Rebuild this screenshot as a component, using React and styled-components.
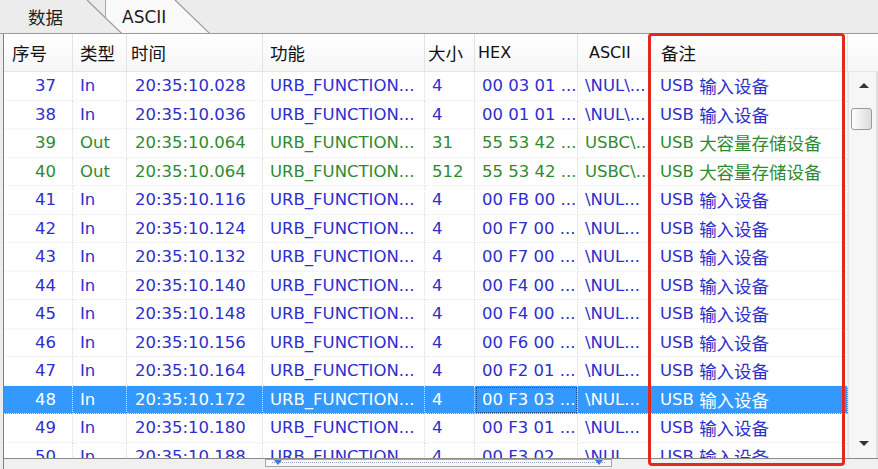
import React from 'react'
import styled, { createGlobalStyle } from 'styled-components'

const GlobalStyle = createGlobalStyle`
  html, body {
    margin: 0;
    padding: 0;
    background: #ececec;
  }
  body {
    font-family: "DejaVu Sans", "Noto Sans CJK SC", sans-serif;
  }
`

const colors = {
  blue: '#2e2ecc',
  green: '#2f8a2f',
  select: '#3399ff',
  grid: '#dcdcdc',
  frame: '#808080',
  red: '#e5281e',
}

const Root = styled.div`
  position: relative;
  width: 878px;
  height: 469px;
  overflow: hidden;
  display: flex;
  flex-direction: column;
  background: #ececec;
`

const TabStrip = styled.div`
  flex: none;
  height: 33px;
  display: flex;
  border-bottom: 1px solid #9b9b9b;
`

const Tab = styled.div`
  position: relative;
  flex: none;
  box-sizing: border-box;
  width: ${p => p.$width}px;
  height: 33px;
  margin-left: ${p => -p.$overlap || 0}px;
  padding-left: ${p => p.$pad}px;
  z-index: ${p => p.$z};
  display: flex;
  align-items: center;
  font-size: 17px;
  color: #1c1c1c;
  background: ${p => (p.$active ? '#f9f9f9' : '#ececec')};
  border-left: ${p => (p.$edge ? '1px solid #a8a8a8' : 'none')};
  clip-path: polygon(0 0, calc(100% - 34px) 0, 100% 100%, 0 100%);

  &::after {
    content: '';
    position: absolute;
    left: calc(100% - 34px);
    top: -1px;
    width: 48px;
    height: 2px;
    background: #9c9c9c;
    transform-origin: 0 0;
    transform: rotate(44deg);
  }
`

const Frame = styled.div`
  flex: 1;
  min-height: 0;
  display: flex;
  flex-direction: column;
  margin-left: 3px;
  border-left: 1px solid ${colors.frame};
  background: #fff;
`

const HeaderRow = styled.div`
  flex: none;
  height: 38px;
  display: flex;
  box-sizing: border-box;
  background: linear-gradient(#ffffff, #f6f6f6);
  border-bottom: 1px solid #e4e4e4;
`

const HeadCell = styled.div`
  flex: none;
  box-sizing: border-box;
  width: ${p => p.$width}px;
  padding-left: ${p => p.$pad}px;
  display: flex;
  align-items: center;
  font-size: 16px;
  color: #111;
  border-right: 1px solid #e3e3e3;
`

const Cjk = styled.span`
  font-family: "Noto Sans CJK SC", sans-serif;
  font-size: 17.5px;
`

const HeadFiller = styled.div`
  flex: 1;
`

const Body = styled.div`
  flex: 1;
  min-height: 0;
  display: flex;
`

const Rows = styled.div`
  flex: none;
  width: 844px;
  overflow: hidden;
`

const Row = styled.div`
  display: flex;
  height: 28.5px;
  background: ${p => (p.$selected ? colors.select : 'transparent')};
  color: ${p => (p.$selected ? '#fff' : p.$out ? colors.green : colors.blue)};
`

const Cell = styled.div`
  flex: none;
  box-sizing: border-box;
  width: ${p => p.$width}px;
  display: flex;
  align-items: center;
  justify-content: ${p => (p.$right ? 'flex-end' : 'flex-start')};
  padding: 0 ${p => (p.$right ? 16 : 0)}px 0 ${p => (p.$right ? 0 : p.$pad)}px;
  font-size: 16.5px;
  white-space: nowrap;
  overflow: hidden;
  border-right: 1px dotted ${p => (p.$selected ? '#cfe4ff' : colors.grid)};
  border-bottom: 1px dotted #ececec;
  outline: ${p => (p.$focus ? '1px dotted #1f4f8f' : 'none')};
  outline-offset: -2px;
`

const VScroll = styled.div`
  flex: 1;
  position: relative;
  background: #f6f6f6;
  border-left: 1px solid #e4e4e4;
  border-right: 2px solid #e0e0e0;
`

const Arrow = styled.div`
  position: absolute;
  left: 10px;
  ${p => (p.$down ? 'bottom: 12px;' : 'top: 11px;')}
  width: 0;
  height: 0;
  border-left: 5px solid transparent;
  border-right: 5px solid transparent;
  ${p => (p.$down ? 'border-top' : 'border-bottom')}: 5px solid #333;
`

const Thumb = styled.div`
  position: absolute;
  left: 2px;
  top: 36px;
  width: 21px;
  height: 22px;
  box-sizing: border-box;
  border: 1px solid #9a9a9a;
  border-radius: 3px;
  background: linear-gradient(90deg, #fdfdfd, #dcdcdc);
`

const HScroll = styled.div`
  flex: none;
  height: 11px;
  box-sizing: border-box;
  border-top: 1px solid #8a8a8a;
  background: #f0f0f0;
  padding-left: 261px;
`

const HThumb = styled.div`
  position: relative;
  width: 347px;
  height: 8px;
  box-sizing: border-box;
  border: 1px solid #a6a6a6;
  background: #f7f7f7;

  &::before {
    content: '';
    position: absolute;
    left: 6px;
    right: 6px;
    top: 2px;
    border-top: 1px dotted #8fa8c8;
  }
`

const Notch = styled.span`
  position: absolute;
  top: 0;
  ${p => (p.$right ? 'right: 8px;' : 'left: 8px;')}
  width: 0;
  height: 0;
  border-left: 4px solid transparent;
  border-right: 4px solid transparent;
  border-top: 5px solid #3f78d8;
`

const Marker = styled.div`
  position: absolute;
  left: 648px;
  top: 33px;
  width: 197px;
  height: 433px;
  box-sizing: border-box;
  border: 3px solid ${colors.red};
  border-radius: 4px;
  pointer-events: none;
`

const columns = [
  { key: 'no', label: '序号', width: 69, head: 8, pad: 0, right: true },
  { key: 'type', label: '类型', width: 54, head: 7, pad: 7 },
  { key: 'time', label: '时间', width: 136, head: 4, pad: 8 },
  { key: 'fn', label: '功能', width: 162, head: 7, pad: 7 },
  { key: 'size', label: '大小', width: 50, head: 3, pad: 7 },
  { key: 'hex', label: 'HEX', width: 103, head: 3, pad: 7, latin: true },
  { key: 'ascii', label: 'ASCII', width: 72, head: 11, pad: 7, latin: true },
  { key: 'note', label: '备注', width: 198, head: 11, pad: 10 },
]

const inRow = (no, time, hex, ascii = '\\NUL...') => ({
  no, type: 'In', time, fn: 'URB_FUNCTION...', size: '4', hex, ascii, note: '输入设备',
})

const rows = [
  inRow(37, '20:35:10.028', '00 03 01 ...', '\\NUL\\...'),
  inRow(38, '20:35:10.036', '00 01 01 ...', '\\NUL\\...'),
  { no: 39, type: 'Out', time: '20:35:10.064', fn: 'URB_FUNCTION...', size: '31', hex: '55 53 42 ...', ascii: 'USBC\\...', note: '大容量存储设备' },
  { no: 40, type: 'Out', time: '20:35:10.064', fn: 'URB_FUNCTION...', size: '512', hex: '55 53 42 ...', ascii: 'USBC\\...', note: '大容量存储设备' },
  inRow(41, '20:35:10.116', '00 FB 00 ...'),
  inRow(42, '20:35:10.124', '00 F7 00 ...'),
  inRow(43, '20:35:10.132', '00 F7 00 ...'),
  inRow(44, '20:35:10.140', '00 F4 00 ...'),
  inRow(45, '20:35:10.148', '00 F4 00 ...'),
  inRow(46, '20:35:10.156', '00 F6 00 ...'),
  inRow(47, '20:35:10.164', '00 F2 01 ...'),
  inRow(48, '20:35:10.172', '00 F3 03 ...'),
  inRow(49, '20:35:10.180', '00 F3 01 ...'),
  inRow(50, '20:35:10.188', '00 F3 02 ...'),
]

const SELECTED = 48

const renderValue = (col, row) => {
  if (col.key === 'note') {
    return (
      <>
        USB&nbsp;<Cjk>{row.note}</Cjk>
      </>
    )
  }
  return row[col.key]
}

export default function App() {
  return (
    <Root>
      <GlobalStyle />
      <TabStrip>
        <Tab $width={122} $pad={28} $z={2}>
          <Cjk>数据</Cjk>
        </Tab>
        <Tab $width={105} $pad={16} $z={1} $overlap={17} $active $edge>
          ASCII
        </Tab>
      </TabStrip>

      <Frame>
        <HeaderRow>
          {columns.map(col => (
            <HeadCell key={col.key} $width={col.width} $pad={col.head}>
              {col.latin ? col.label : <Cjk>{col.label}</Cjk>}
            </HeadCell>
          ))}
          <HeadFiller />
        </HeaderRow>

        <Body>
          <Rows>
            {rows.map(row => {
              const selected = row.no === SELECTED
              return (
                <Row key={row.no} $selected={selected} $out={row.type === 'Out'}>
                  {columns.map(col => (
                    <Cell
                      key={col.key}
                      $width={col.width}
                      $pad={col.pad}
                      $right={col.right}
                      $selected={selected}
                      $focus={selected && col.key === 'hex'}
                    >
                      {renderValue(col, row)}
                    </Cell>
                  ))}
                </Row>
              )
            })}
          </Rows>
          <VScroll>
            <Arrow />
            <Thumb />
            <Arrow $down />
          </VScroll>
        </Body>

        <HScroll>
          <HThumb>
            <Notch />
            <Notch $right />
          </HThumb>
        </HScroll>
      </Frame>

      <Marker />
    </Root>
  )
}
